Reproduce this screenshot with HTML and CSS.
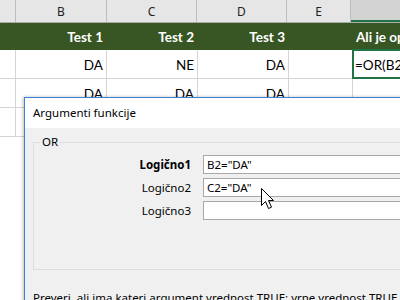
FILE: index.html
```html
<!DOCTYPE html>
<html>
<head>
<meta charset="utf-8">
<link rel="stylesheet" href="styles.css">
</head>
<body>
<div class="sheet">
  <div class="row hdr">
    <div class="c ca"></div>
    <div class="c cb">B</div>
    <div class="c cc">C</div>
    <div class="c cd">D</div>
    <div class="c ce">E</div>
    <div class="c cf sel-col"></div>
  </div>
  <div class="row titles">
    <div class="c ca"></div>
    <div class="c cb">Test 1</div>
    <div class="c cc">Test 2</div>
    <div class="c cd">Test 3</div>
    <div class="c ce"></div>
    <div class="c cf">Ali je opravil</div>
  </div>
  <div class="row data">
    <div class="c ca"></div>
    <div class="c cb">DA</div>
    <div class="c cc">NE</div>
    <div class="c cd">DA</div>
    <div class="c ce"></div>
    <div class="c cf active">=OR(B2="DA";C2="DA")</div>
  </div>
  <div class="row data">
    <div class="c ca"></div>
    <div class="c cb">DA</div>
    <div class="c cc">DA</div>
    <div class="c cd">DA</div>
    <div class="c ce"></div>
    <div class="c cf"></div>
  </div>
  <div class="row data">
    <div class="c ca"></div>
    <div class="c cb"></div>
    <div class="c cc"></div>
    <div class="c cd"></div>
    <div class="c ce"></div>
    <div class="c cf"></div>
  </div>
</div>

<div class="dialog">
  <div class="dlg-title">Argumenti funkcije</div>
  <div class="dlg-body">
    <fieldset class="group">
      <legend>OR</legend>
      <div class="args">
        <div class="lbl bold">Logično1</div>
        <div class="inp">B2="DA"</div>
        <div class="lbl">Logično2</div>
        <div class="inp">C2="DA"</div>
        <div class="lbl">Logično3</div>
        <div class="inp"></div>
      </div>
    </fieldset>
    <p class="desc">Preveri, ali ima kateri argument vrednost TRUE; vrne vrednost TRUE ali FALSE.</p>
  </div>
</div>

<svg class="cursor" width="14" height="23" viewBox="0 0 14 23">
  <path d="M0.5 0.5 L0.5 17.5 L4.5 13.5 L7.5 20.5 L10.5 19.2 L7.5 12.5 L12.5 12.5 Z" fill="#fff" stroke="#000" stroke-width="1" stroke-linejoin="miter"/>
</svg>
</body>
</html>
```

FILE: styles.css
```css
html, body {
  margin: 0;
  padding: 0;
}
body {
  width: 400px;
  height: 300px;
  overflow: hidden;
  position: relative;
  background: #fff;
  font-family: Lato, "Liberation Sans", sans-serif;
}
.sheet {
  width: 460px;
}
.row {
  display: flex;
}
.c {
  box-sizing: content-box;
  border-right: 1px solid #d4d4d4;
  white-space: nowrap;
  overflow: hidden;
  flex: none;
}
.ca { width: 15px; }
.cb { width: 90px; }
.cc { width: 89px; }
.cd { width: 89px; }
.ce { width: 63px; }
.cf { flex: 1; border-right: none; }

.hdr {
  height: 22px;
  background: #e6e6e6;
  border-bottom: 1px solid #ababab;
  font-family: "Noto Sans", sans-serif;
  font-size: 12px;
  color: #222;
}
.hdr .c {
  border-right-color: #bdbdbd;
  display: flex;
  align-items: center;
  justify-content: center;
}
.hdr .sel-col {
  background: #d2d2d2;
  box-shadow: inset 0 -2px 0 #217346;
}

.titles {
  height: 27px;
  background: #375623;
  color: #fff;
  font-weight: bold;
  font-size: 13.5px;
}
.titles .c {
  border-right-color: #375623;
  display: flex;
  align-items: center;
  justify-content: flex-end;
  padding-right: 0;
}
.titles .cb, .titles .cc, .titles .cd {
  width: 87px;
  padding-right: 3px;
}
.titles .cf {
  justify-content: flex-start;
  padding-left: 3px;
}

.data {
  height: 28px;
  border-bottom: 1px solid #d4d4d4;
  font-size: 13.5px;
  color: #000;
}
.data .c {
  display: flex;
  align-items: flex-end;
  justify-content: flex-end;
  padding-bottom: 5px;
  height: 23px;
}
.data .cb, .data .cc, .data .cd {
  width: 87px;
  padding-right: 3px;
}
.data .cf {
  justify-content: flex-start;
  padding-left: 2px;
}
.data .active {
  outline: 2px solid #217346;
  outline-offset: -1px;
  position: relative;
}

.dialog {
  position: absolute;
  left: 24px;
  top: 97px;
  width: 470px;
  height: 260px;
  border: 1px solid #3d7fd0;
  background: #f0f0f0;
  box-shadow: -1px 0 3px rgba(0, 0, 0, 0.25);
  font-family: "Noto Sans", sans-serif;
  font-size: 11.5px;
  color: #000;
}
.dlg-title {
  height: 30px;
  line-height: 30px;
  background: #fff;
  padding-left: 8px;
}
.dlg-body {
  padding: 6px 0 0 8px;
}
.group {
  margin: 0;
  padding: 5px 0 49px 0;
  border: 1px solid #dcdcdc;
}
.group legend {
  margin-left: 6px;
  padding: 0 2px;
  line-height: 16px;
}
.args {
  display: grid;
  grid-template-columns: 157px 320px;
  grid-auto-rows: 19px;
  column-gap: 12px;
  row-gap: 4px;
}
.lbl {
  text-align: right;
  line-height: 19px;
}
.bold {
  font-weight: bold;
}
.inp {
  box-sizing: border-box;
  height: 19px;
  border: 1px solid #a8a8a8;
  background: #fff;
  padding-left: 3px;
  line-height: 17px;
  white-space: nowrap;
}
.desc {
  margin: 20px 0 0 0;
  line-height: 16px;
  white-space: nowrap;
}
.cursor {
  position: absolute;
  left: 261px;
  top: 188px;
}
```
